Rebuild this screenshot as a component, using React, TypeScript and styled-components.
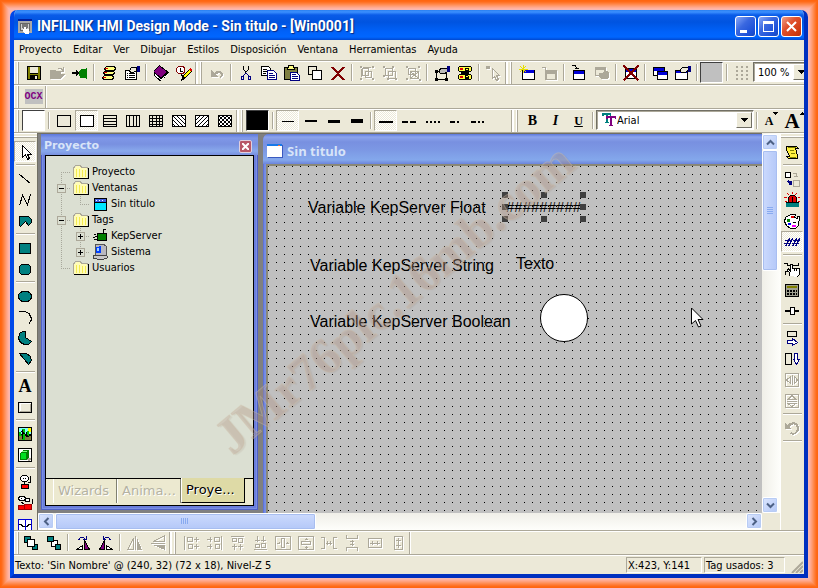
import React from "react";
import styled, { createGlobalStyle, css } from "styled-components";

const face = "#ece9d8";
const shade = "#aca899";
const teal = "#008080";
const navy = "#000080";
const blue = "#0000d8";
const purple = "#800080";

const GlobalStyle = createGlobalStyle`
  * { box-sizing: border-box; }
  body { margin: 0; font: 11px/16px "DejaVu Sans Condensed", "DejaVu Sans", sans-serif; color: #000; }
  button, select { font: inherit; color: inherit; padding: 0; margin: 0; border: 0; background: none; }
  ul { list-style: none; margin: 0; padding: 0; }
`;

/* ---------- icon drawings, 16 x 16 grid ---------- */

type Shape = [d: string, fill?: string, stroke?: string, width?: number];

const box = (x: number, y: number, w: number, h: number) => `M${x} ${y}h${w}v${h}h${-w}z`;

const art: Record<string, Shape[]> = {
  save: [[box(1, 1, 14, 14), "#000"], [box(2, 2, 2, 12), "#808000"], [box(12, 2, 2, 12), "#808000"], [box(4, 9, 8, 1), "#808000"], [box(4, 2, 8, 6), face], [box(5, 10, 6, 4), "#000"], [box(9, 11, 2, 3), face]],
  open: [["M1 14V5h5l1 1h5v3h4l-4 5z", shade], ["M9 3.500h3l2 2M14.500 2v4h-3", undefined, shade]],
  plug: [["M0 7h4V5l4 3-4 3V9H0z", "#000"], [box(8, 5, 6, 8), "#008000"], ["M9 4h5v9H9l-2-2V6z", "#008000"], [box(14, 3, 1, 11), "#008000"]],
  stack: [["M5.500 1.500h8l1 2-1 2h-9l-1-2zM4.500 6.500h8l1 1-1 2h-9l-1-2zM3.500 10.500h8l1 2-1 2h-9l-1-2z", "#ffff80", "#000"], ["M4 3h3v1H4zM3 7h3v1H3zM2 12h3v1H2z", "#e00000"]],
  props: [["M1.500 5.500h11v9h-11z", "#fff", "#000"], ["M3 8h1v1H3zM3 10h1v1H3zM3 12h1v1H3z", "#000"], ["M5 8.500h6M5 10.500h6M5 12.500h6", undefined, "#000"], ["M5.500 5.500l2-3h5v3l-3 2h-3z", face, "#000"], [box(13, 1, 3, 6), navy]],
  props2: [["M2.500 6.500h10v8h-10z", face, "#000"], ["M1 13h3v3H1zM11 13h3v3h-3zM1 5h3v3H1z", "#000"], ["M5 6l2-3h6v4l-3 2-4-1z", "#bbb", "#000"], [box(13, 1, 3, 6), navy]],
  conn: [["M2.500 1.500h11l1 1v3l-1 1h-11l-1-1v-3z", "#ffff40", "#000"], ["M2.500 9.500h11l1 1v3l-1 1h-11l-1-1v-3z", "#ffff40", "#000"], ["M4 7h8v2H4z", "#000"], ["M8.500 6V3.500h3V6M9 5h2M8.500 10v4M9 10.500h2M9 12.500h3M11.500 11v3M9 13.500h2", undefined, "#000"], ["M3 3h3v2H3zM3 11h3v2H3z", "#e00000"]],
  book: [["M6 0l10 7-1 3-8 6-6-5V6z", "#000"], ["M6 1l8 6-6 5-7-5z", purple], ["M2 9l6 5 7-5v1l-7 5-6-4z", "#fff"]],
  clock: [["M2 1h5l2 2v4l-2 2H2L0 7V3z", "#800000"], ["M3 2h3l2 1v4L6 8H3L1 7V3z", "#fff"], ["M4.500 3v3h2M5 9l2 3", undefined, "#000"], ["M7 14l1-4 6-6 2 2-6 6z", "#ffff00", "#000"], ["M14 3l2 2-1 2-2-2z", "#e00000"], ["M6 12l3 2-4 2z", "#000"]],
  undo: [["M2 5v7h7L7 10c2-3 5-2 5 0l-1 3h1l2-3c0-4-5-6-9-2z", shade]],
  cut: [["M5.500 1v3l2 3v2M10.500 1v3l-2 3", undefined, "#000"], ["M7.500 8l-2 3M8.500 8l2 3", undefined, navy], ["M3.500 11.500h2v3h-2zM10.500 11.500h2v3h-2z", undefined, navy]],
  copy: [["M.500 1.500h7l2 2v7h-9z", "#fff", "#000"], ["M2 4.500h4M2 6.500h4M2 8.500h3", undefined, "#000"], ["M6.500 5.500h6l3 3v6h-9z", "#fff", navy], ["M8 8.500h4M8 10.500h6M8 12.500h6", undefined, navy]],
  paste: [[box(0, 2, 14, 13), "#000"], [box(1, 3, 12, 11), "#808040"], ["M4 0h6v2h1v3H3V2h1z", "#000"], ["M5 1h4v2h1v1H4V3h1z", "#ffff80"], ["M6.500 7.500h6l3 3v5h-9z", "#fff", navy], ["M8 9.500h4M8 11.500h6M8 13.500h6", undefined, navy]],
  dup: [["M1.500 1.500h8v8h-8z", face, "#000"], ["M5.500 5.500h9v9h-9z", "#fff", "#000"]],
  del: [["M2 2l12 13M14 2L2 15", undefined, "#800000", 2]],
  group: [["M3.500 3.500h6v7h-6zM6.500 6.500h6v6h-6z", undefined, shade], ["M1 1h2v2H1zM13 1h2v2h-2zM1 13h2v2H1zM13 13h2v2h-2zM4 2h8v1H4zM2 4h1v8H2z", shade]],
  ungroup: [["M3.500 3.500h7v7h-7zM6.500 6.500h7v7h-7z", undefined, shade], ["M1 1h2v2H1zM10 1h2v2h-2zM1 10h2v2H1zM13 13h2v2h-2zM5 13h2v2H5z", shade]],
  regroup: [["M3.500 3.500h7v6h-7zM5.500 6.500h8v7h-8zM6 7l7 6M13 7l-7 6", undefined, shade], ["M1 1h2v2H1zM13 1h2v2h-2zM1 13h2v2H1zM14 14h2v2h-2z", shade]],
  pick: [["M0 1h4v3H0z", shade], ["M6.500 3.500v10l2-2 2 4 2-1-2-4h3z", undefined, shade]],
  newwin: [[box(3, 5, 13, 10), "#000"], [box(4, 5, 11, 3), blue], [box(4, 8, 11, 6), "#fff"], ["M0 4h9M4.500 0v8M1 1l6 6M7 1L1 7", undefined, "#e8e000"]],
  delwin: [[box(3, 5, 12, 10), shade], [box(5, 9, 8, 5), face], ["M0 2h3v3M3 5h2", undefined, shade]],
  winto: [[box(2, 5, 12, 10), "#000"], [box(3, 6, 10, 3), blue], [box(3, 9, 10, 5), "#fff"], ["M1 .500h3l2 3M4 3.500h4", undefined, "#000"]],
  winoff: [[box(1, 2, 11, 9), shade], [box(2, 5, 8, 5), face], ["M5 8h3l2-2h3l2 2v5l-2 1H7l-2-2z", shade]],
  winx: [[box(2, 3, 12, 11), "#000"], [box(3, 4, 10, 3), blue], [box(3, 7, 10, 6), "#fff"], ["M.500 .500l15 15M15.500 .500l-15 15", undefined, "#800000", 2]],
  wins: [[box(1, 2, 12, 9), "#000"], [box(2, 3, 10, 3), blue], [box(2, 6, 10, 4), "#fff"], [box(5, 6, 11, 9), "#000"], [box(6, 7, 9, 3), blue], [box(6, 10, 9, 4), "#fff"]],
  winprop: [[box(0, 5, 13, 10), "#000"], [box(1, 6, 11, 2), blue], [box(1, 8, 11, 6), "#fff"], ["M5 5l3-3h6v3l-4 3-4-1z", face, "#000"], [box(13, 1, 3, 6), navy]],
  grid: [["M2 1h2v2H2zM7 1h2v2H7zM12 1h2v2h-2zM2 5h2v2H2zM7 5h2v2H7zM12 5h2v2h-2zM2 9h2v2H2zM7 9h2v2H7zM12 9h2v2h-2zM2 13h2v2H2zM7 13h2v2H7zM12 13h2v2h-2z", shade]],
  rect: [["M1.500 2.500h13v11h-13z", "none", "#000"]],
  rectw: [["M1.500 2.500h13v11h-13z", "#fff", "#000"]],
  hlines: [["M1.500 2.500h13v11h-13zM2 5.500h12M2 8.500h12M2 11.500h12", "none", "#000"]],
  vlines: [["M1.500 2.500h13v11h-13zM4.500 3v10M8.500 3v10M11.500 3v10", "none", "#000"]],
  cross: [["M1.500 2.500h13v11h-13zM2 5.500h12M2 8.500h12M2 11.500h12M4.500 3v10M8.500 3v10M11.500 3v10", "none", "#000"]],
  diag: [["M1.500 2.500h13v11h-13z", "#fff", "#000"], ["M2.500 3.500l10 10M6.500 3.500l8 8M10.500 3.500l4 4M2.500 7.500l6 6M2.500 11.500l2 2", undefined, "#000"]],
  diag2: [["M1.500 2.500h13v11h-13z", "#fff", "#000"], ["M13.500 3.500l-10 10M9.500 3.500l-8 8M5.500 3.500l-4 4M14.500 6.500l-7 7M14.500 10.500l-3 3", undefined, "#000"]],
  hatch: [["M1.500 2.500h13v11h-13z", "#fff", "#000"], ["M2.500 3.500l10 10M6.500 3.500l8 8M10.500 3.500l4 4M2.500 7.500l6 6M2.500 11.500l2 2M13.500 3.500l-10 10M9.500 3.500l-8 8M5.500 3.500l-4 4M14.500 6.500l-7 7M14.500 10.500l-3 3", undefined, "#000"]],
  w1: [[box(2, 8, 12, 1), "#000"]],
  w2: [[box(2, 7, 12, 2), "#000"]],
  w3: [[box(2, 7, 12, 3), "#000"]],
  w4: [[box(2, 6, 12, 4), "#000"]],
  s1: [[box(1, 8, 14, 2), "#000"]],
  s2: [["M1 8h6v2H1zM9 8h6v2H9z", "#000"]],
  s3: [["M2 8h2v2H2zM6 8h2v2H6zM10 8h2v2h-2zM14 8h2v2h-2z", "#000"]],
  s4: [["M3 8h5v2H3zM10 8h2v2h-2z", "#000"]],
  s5: [["M1 8h5v2H1zM8 8h2v2H8zM12 8h2v2h-2z", "#000"]],
  tt: [["M1 1h9v3H9V3H7v7h1v1H4v-1h1V3H3v1H1z", teal], ["M5 4h10v3h-1V6h-3v7h1v1H8v-1h1V6H7v1H5z", purple]],
  arrow: [["M5.500 1.500v12l3-3 2 5 2-1-2-4h4z", "#fff", "#000"]],
  line: [["M2.500 3.500l11 9", undefined, "#000"]],
  zig: [["M2.500 13.500l3-10 5 9 3-10", undefined, "#000"]],
  poly: [["M2.500 3.500h9l3 3v3l-3 3-3-4-5 5-1-1z", teal, "#000"]],
  frect: [["M2.500 3.500h11v10h-11z", teal, "#000"]],
  rrect: [["M4.500 3.500h7l2 2v6l-2 2h-7l-2-2v-6z", teal, "#000"]],
  ellipse: [["M1.500 8.500a6.500 5.500 0 0 1 13 0a6.500 5.500 0 0 1-13 0z", teal, "#000"]],
  arc: [["M2 2.500h6l4 2 2 4v3l-2 3", undefined, "#000"]],
  pie: [["M8.500 1.500h-3l-3 2-1 5 2 4 4 2h4l3-3-6-4z", teal, "#000"]],
  chord: [["M2.500 2.500h7l4 3 1 4-3 4z", teal, "#000"]],
  btn: [["M1.500 3.500h13v10h-13z", face, "#000"], ["M3 12V4.500h11", undefined, "#fff"], ["M3 12.500h10.500V5", undefined, shade]],
  cactus: [[box(1, 1, 14, 14), "#000"], [box(2, 2, 12, 6), "#80ffff"], [box(2, 10, 12, 4), "#808040"], [box(11, 2, 3, 4), "#ffff00"], ["M5 3h3v11H5zM2 6h2v3h1v1H2zM9 8h1V5h2v5H9z", "#00c000"], ["M5 4v9M9 6v5M4 5l8 6", undefined, "#000"]],
  cube: [["M1.500 1.500h13v13h-13z", "#fff", "#000"], ["M10 11h4v2l-3 1z", shade], ["M3 6l3-3h6v7l-3 3H3z", "#008000"], [box(4, 6, 5, 6), "#00e020"], ["M4 5l2-1h5l-2 1z", "#80ff80"]],
  alarm: [["M5.500 1.500h4l2 2v2l-2 2h-4l-2-2v-2z", "#fff", "#000"], ["M13.500 2v6l-2 1M6 4h1M8 4h1M7.500 8v2", undefined, "#000"], ["M4.500 10.500h7v4h-7z", "#ff0000", "#000"]],
  alarms: [["M2.500 1.500h5l1 2-1 2h-5l-1-2zM8.500 3.500h4v3h-4z", "#fff", "#000"], ["M15 4v5M4 7l3 2M4 3h1", undefined, "#000"], ["M1.500 10.500h6v4h-6zM7.500 9.500h7v5h-7z", "#ff0000", "#a00000"]],
  trend: [["M1.500 3.500h13v12h-13z", "#fff", blue], ["M2 8.500h2l2 2h4l2-2h2", undefined, "#000"], ["M8.500 4v11", undefined, blue]],
  scroll: [["M2.500 2.500h10l2 2h-3l2 7v3h-9l-2-2h3l-3-7z", "#fff040", "#000"], ["M4 3.500h8M6 13.500h6M6 6.500h4M7 9.500h4", undefined, "#808000"]],
  swap: [["M1.500 1.500h5v5h-5z", "#fff", "#000"], ["M9.500 9.500h6v6h-6z", undefined, shade], ["M9 2h3v4M10 5h4", undefined, shade], ["M2 11l3-3v2h3v4H5v-2z", navy]],
  siren: [["M4 12l1-7 2-2h3l2 2 1 7z", "#e00000", "#000"], [box(2, 11, 13, 4), teal], ["M2 10.500h13M8.500 5v6", undefined, "#000"], ["M8 0v2M3 1l2 2M13 1l-2 2M0 5h3M14 5h3M1 9h2M14 9h2", undefined, "#e00000"]],
  palette: [["M6.500 1.500h5l-1 3 3 1v-2h2l-1 9-3 3h-5l-4-3-2-4 1-4z", "#fff", "#000"], ["M7 3h3v2H7z", "#e00000"], ["M3 6h3v3H3z", "#008000"], ["M4 10h3v2H4z", "#0000ff"], ["M8 12h4v2H8z", "#ff00ff"], ["M9 9h3v1H9z", "#000"]],
  hashes: [["M1.500 12.500l4-8M4.500 12.500l4-8M8.500 12.500l4-8M11.500 12.500l4-8M1 6.500h7M0 9.500h7M9 6.500h7M8 9.500h7", undefined, navy]],
  hand: [["M0 2.500h3v2h11V2M1.500 14v-4h2", undefined, "#000"], ["M5.500 15v-3l-2-3 1-1 2 2V3h2v4h7v6l-2 3", "#fff", "#000"], ["M10.500 7v3M12.500 7v3", undefined, "#000"]],
  calc: [["M1.500 2.500h13v12h-13z", "#a0a090", "#000"], [box(3, 4, 10, 2), "#808000"], ["M3 8h2v2H3zM6 8h2v2H6zM9 8h2v2H9zM12 8h1v2h-1zM3 11h2v2H3zM6 11h2v2H6zM9 11h2v2H9zM12 11h1v2h-1z", "#000"]],
  slider: [["M1 8h14", undefined, "#000", 2], ["M6.500 4.500h4v7h-4z", "#fff", "#000"]],
  boxarrow: [["M3.500 1.500h9v5h-9z", face, "#000"], ["M3.500 10.500h5v-2l5 4-5 3v-2h-5z", "#fff", navy]],
  boxdown: [["M1.500 2.500h6v11h-6z", face, "#000"], ["M10.500 2.500h3v6h2l-3 5-3-5h1z", "#fff", navy]],
  fliph: [["M1.500 1.500h13v13h-13zM8.500 3v10M6.500 4.500v7l-4-3.500zM10.500 4.500v7l3-3.500z", undefined, shade]],
  flipv: [["M1.500 1.500h13v13h-13zM3 8.500h10M4 6.500h8l-4-4zM4 10.500h8l-4 3z", undefined, shade]],
  rotate: [["M1 3v6h6L5 7c3-4 8-3 8 1s-3 6-6 4l-1 2c5 2 9-1 9-6 0-6-7-8-12-3z", shade]],
  front: [["M1.500 1.500h6v6h-6zM9.500 9.500h5v5h-5z", teal, "#000"], ["M4.500 4.500h7v7h-7z", "#fff", "#000"]],
  back: [["M5.500 5.500h6v6h-6z", "#fff", "#000"], ["M1.500 1.500h6v5h-6zM9.500 9.500h5v5h-5z", teal, "#000"]],
  rotl: [["M1.500 14.500h6v-4z", "#fff", "#000"], ["M9.500 14.500h5l-5-9z", purple, "#000"], ["M3.500 5.500c1-4 5-4 7-1M8 4.500h3V1", undefined, navy]],
  rotr: [["M8.500 14.500h6l-6-4z", "#fff", "#000"], ["M1.500 14.500h5v-9z", purple, "#000"], ["M12.500 5.500c-1-4-5-4-7-1M8 4.500H5V1", undefined, navy]],
  mirh: [["M1 14.500h5.500V3zM8.500 1v14", undefined, shade], ["M10 15h5L10 3z", shade]],
  mirv: [["M14.500 1v5.500H3zM1 8.500h14", undefined, shade], ["M15 10v5L3 10z", shade]],
  al: [["M1.500 1v14M4.500 2.500h5v4h-5zM5.500 9.500h4v4h-4zM11 4.500h5M13 2v5M11 11.500h5M13 9v5", undefined, shade]],
  ar: [["M15.500 1v14M8.500 2.500h5v4h-5zM9.500 9.500h4v4h-4zM1 4.500h5M4 2v5M1 11.500h5M4 9v5", undefined, shade]],
  at: [["M2 1.500h13M3.500 3.500h4v3h-4zM9.500 3.500h4v4h-4zM5.500 9v6M3 11h5M11.500 9v6M9 11h5", undefined, shade]],
  ab: [["M2 14.500h13M3.500 9.500h4v3h-4zM9.500 8.500h4v4h-4zM5.500 1v6M3 5h5M11.500 1v6M9 5h5", undefined, shade]],
  ch: [["M.500 1.500h15v13h-15zM6.500 3.500h3v9h-3zM2 8h3M11 8h3M4 7v2M12 7v2", undefined, shade]],
  cv: [["M.500 1.500h15v13h-15zM3.500 6.500h9v3h-9zM8 3v2M8 11v3M7 4.500h3M7 12.500h3", undefined, shade]],
  sh: [["M0 2.500h3.500v11H0M16 2.500h-3.500v11H16M5 8h6M6.500 6v4M9.500 6v4", undefined, shade]],
  sv: [["M2.500 0v3.500h11V0M2.500 16v-3.500h11V16M8 5v6M6 6.500h4M6 9.500h4", undefined, shade]],
  mw: [["M1.500 3.500h13v9h-13zM3 8h10M5.500 6v4M10.500 6v4", undefined, shade]],
  mh: [["M4.500 1.500h8v13h-8zM8.500 3v10M6 5.500h5M6 10.500h5", undefined, shade]],
  folder: [["M1 14V4l2-2h5l1 2h5v10z", "#fffcb8"], ["M.500 13.500V4l2-2.500h5l1 2h5.500v1", undefined, shade], ["M1 14.500h14.500V4", undefined, "#000"], ["M3 5v8M6 5v8M9 6v7M12 6v7", undefined, "#f4ec50"]],
  window: [["M2.500 2.500h12v12h-12z", "#00e8ff", "#000"], [box(3, 3, 11, 3), "#4060e0"], ["M3 6.500h11", undefined, "#000"], ["M4 4h1v1H4zM7 4h1v1H7zM10 4h1v1h-1z", "#fff"]],
  server: [["M5.500 5.500h9v7h-9z", "#008000", "#000"], ["M11.500 1v4M2 6.500h2M2 11.500h3M1 9h2M3 8h2M12 1h2", undefined, "#000"]],
  pc: [["M3 1l8-1 3 2v9l-4 1-6-1z", "#b8b8c0", "#555"], ["M4 3l5-1v7H4z", "#0040ff"], [box(5, 4, 2, 3), "#a0d0ff"], ["M1 12l8-1 6 1v2l-6 2-8-2z", "#c8c8c8", "#444"]],
  app: [[box(1, 1, 14, 14), "#a8a8a8"], [box(1, 1, 14, 2), "#0020a0"], ["M3.500 5.500h9v7h-9z", "#d0d0d0", "#666"], ["M5 6h6v3l-3 3-3-2z", "#777"], ["M7 9h2v2h3v5H8l-2-3z", "#fff"]],
};

const Svg = styled.svg<{ $off?: boolean }>`
  display: block;
  flex: none;
  filter: ${(p) => (p.$off ? "drop-shadow(1px 1px 0 #fff)" : "none")};
`;

function Icon({ name, off, size = 16 }: { name: string; off?: boolean; size?: number }) {
  return (
    <Svg width={size} height={size} viewBox="0 0 16 16" shapeRendering="crispEdges" $off={off} aria-hidden="true">
      {art[name].map(([d, fill, stroke, width], i) => (
        <path key={i} d={d} fill={fill ?? "none"} stroke={stroke} strokeWidth={stroke ? width ?? 1 : undefined} />
      ))}
    </Svg>
  );
}

/* ---------- shell ---------- */

const rings = ["#ff6610", "#ff6a18", "#ff7428", "#ff7f3c", "#ff8b50", "#ff9666", "#ffa07c", "#ffaa90", "#ffb2a2", "#f8b8b0"];

const Page = styled.div`
  height: 100vh;
  min-height: 480px;
  padding: 10px;
  background: #f8b8b0;
  box-shadow: ${rings.map((c, i) => `inset 0 0 0 ${i + 1}px ${c}`).join(", ")};
  display: flex;
`;

const Window = styled.main`
  flex: 1;
  min-width: 0;
  display: flex;
  flex-direction: column;
  border: 4px solid #0048e0;
  border-top: 0;
  border-radius: 7px 7px 0 0;
  border-left-color: #0048e8;
  border-right-color: #0030c0;
  border-bottom-color: #0030c0;
  background: ${face};
  overflow: hidden;
`;

const TitleBar = styled.header`
  height: 30px;
  margin: 0 -4px;
  flex: none;
  padding: 2px 6px 0 7px;
  display: flex;
  align-items: center;
  gap: 4px;
  background: linear-gradient(#2a80f0 0, #3c90ff 2px, #0a5ce8 5px, #0054e0 12px, #0062fa 22px, #0066ff 27px, #0048d0 30px);
`;

const Title = styled.h1`
  flex: 1;
  margin: 0;
  font: bold 14px/20px Roboto, "Noto Sans", sans-serif;
  color: #fff;
  text-shadow: 1px 1px 1px #0a2a80;
  white-space: nowrap;
`;

const CaptionButton = styled.button<{ $close?: boolean }>`
  width: 21px;
  height: 21px;
  border: 1px solid #fff;
  border-radius: 3px;
  display: grid;
  place-items: center;
  background: ${(p) =>
    p.$close
      ? "linear-gradient(135deg, #f0a088, #e0502c 40%, #d03a10 80%, #b83010)"
      : "linear-gradient(135deg, #88a8f8, #3a68e0 40%, #1c50d8 80%, #1848b8)"};
`;

const CaptionGroup = styled.div`
  display: flex;
  gap: 2px;
`;

const MenuBar = styled.nav`
  height: 20px;
  flex: none;
  display: flex;
  gap: 11px;
  padding: 1px 5px;
`;

const MenuItem = styled.button`
  line-height: 18px;
  white-space: nowrap;
`;

const Grip = styled.span`
  width: 5px;
  flex: none;
  margin: 0 3px 0 0;
  border-left: 1px solid #fff;
  border-right: 1px solid ${shade};
  box-shadow: inset -1px 0 0 #fff;
`;

const Bar = styled.div<{ $tight?: boolean }>`
  height: 24px;
  flex: none;
  display: flex;
  overflow: hidden;
  border-top: 1px solid ${shade};
  box-shadow: inset 0 1px 0 #fff;
  padding-top: 1px;
  ${(p) =>
    p.$tight &&
    css`
      > ${Grip}:first-child {
        margin-right: 0;
      }
    `}
`;

const GroupEnd = styled.span`
  width: 2px;
  flex: none;
  border-left: 1px solid ${shade};
  border-right: 1px solid #fff;
`;

const Spacer = styled.span`
  width: 22px;
  flex: none;
`;

const Sep = styled.span<{ $column?: boolean }>`
  flex: none;
  ${(p) =>
    p.$column
      ? css`
          height: 2px;
          width: 19px;
          margin: 2px 2px;
          border-top: 1px solid ${shade};
          border-bottom: 1px solid #fff;
        `
      : css`
          width: 2px;
          height: 17px;
          margin: 2px 2px;
          border-left: 1px solid ${shade};
          border-right: 1px solid #fff;
        `}
`;

const ToolButton = styled.button<{ $on?: boolean; $column?: boolean }>`
  width: ${(p) => (p.$column ? 22 : 23)}px;
  height: 21px;
  flex: none;
  display: grid;
  place-items: center;
  ${(p) =>
    p.$on &&
    css`
      border: 1px solid;
      border-color: ${shade} #fff #fff ${shade};
      background: repeating-conic-gradient(#fff 0 25%, ${face} 0 50%) 0 0 / 2px 2px;
    `}
`;

const LetterButton = styled(ToolButton)<{ $size: number; $italic?: boolean; $under?: boolean }>`
  display: flex;
  align-items: center;
  justify-content: center;
  font-family: "Liberation Serif", serif;
  font-weight: bold;
  font-style: ${(p) => (p.$italic ? "italic" : "normal")};
  font-size: ${(p) => p.$size}px;
  line-height: 18px;
  text-decoration: ${(p) => (p.$under ? "underline" : "none")};
`;

const SizeMark = styled.svg`
  align-self: flex-start;
  margin-top: 2px;
  flex: none;
`;

const Swatch = styled.button<{ $color: string }>`
  width: 23px;
  height: 21px;
  margin-right: 1px;
  flex: none;
  border: 1px solid;
  border-color: #404040 #fff #fff #404040;
  background: ${(p) => p.$color};
`;

const OcxButton = styled(ToolButton)`
  font: bold 10px/15px "Liberation Mono", monospace;
  color: ${purple};
`;
const OcxFace = styled.span`
  background: #c0c0c0;
  width: 18px;
  height: 15px;
`;

const Combo = styled.label<{ $width: number }>`
  width: ${(p) => p.$width}px;
  height: 20px;
  flex: none;
  display: flex;
  align-items: center;
  padding: 0 1px 0 4px;
  border: 1px solid;
  border-color: #716f64 #fff #fff #716f64;
  box-shadow: inset 1px 1px 0 ${shade};
  background: #fff;
`;

const ComboSelect = styled.select`
  flex: 1;
  min-width: 0;
  height: 18px;
  padding-top: 1px;
  appearance: none;
`;

const ComboArrow = styled.span`
  width: 16px;
  height: 16px;
  flex: none;
  display: grid;
  place-items: center;
  background: ${face};
  border: 1px solid;
  border-color: #fff #716f64 #716f64 #fff;
`;

function Dropper() {
  return (
    <ComboArrow aria-hidden="true">
      <svg width="7" height="4" shapeRendering="crispEdges">
        <path d="M0 0h7v1H6v1H5v1H4v1H3V3H2V2H1V1H0z" />
      </svg>
    </ComboArrow>
  );
}

/* ---------- middle area ---------- */

const Middle = styled.div`
  flex: 1;
  min-height: 0;
  display: flex;
  border-top: 1px solid ${shade};
`;

const SideBar = styled.aside<{ $right?: boolean }>`
  width: ${(p) => (p.$right ? 24 : 23)}px;
  flex: none;
  overflow: hidden;
  display: flex;
  flex-direction: column;
  border-left: ${(p) => (p.$right ? "1px solid #fff" : "0")};
`;

const SideGrip = styled.span`
  height: 5px;
  flex: none;
  margin-bottom: 3px;
  border-top: 1px solid #fff;
  border-bottom: 1px solid ${shade};
  box-shadow: inset 0 -1px 0 #fff;
`;

const Desktop = styled.section`
  flex: 1;
  min-width: 0;
  position: relative;
  display: grid;
  grid-template: minmax(0, 1fr) 17px / minmax(0, 1fr) 18px;
  border-left: 1px solid #716f64;
  background: ${face};
`;

const Workspace = styled.div`
  display: flex;
  gap: 5px;
  padding: 0 0 0 3px;
  min-width: 0;
  min-height: 0;
  overflow: hidden;
  background: #808080;
  align-items: stretch;
  border-top: 1px solid #716f64;
`;

const Panel = styled.section`
  width: 217px;
  flex: none;
  margin-bottom: 3px;
  display: flex;
  flex-direction: column;
  padding: 0 4px 4px;
  background: #6a7ddc;
  box-shadow: inset 0 0 0 1px #5060c8, inset 0 0 0 2px #7a90e4;
`;

const PanelTitle = styled.header`
  height: 21px;
  flex: none;
  margin: 0 -4px;
  padding: 3px 6px 0 3px;
  display: flex;
  align-items: center;
  justify-content: space-between;
  color: #d8e4f8;
  background: linear-gradient(#5c78dc, #8098e8 4px, #7890e0 10px, #88a8ec 17px, #7890e0);
`;

const PanelHeading = styled.h2`
  margin: 0;
  font: bold 11px/16px "DejaVu Sans", sans-serif;
`;

const PanelClose = styled.button`
  width: 13px;
  height: 13px;
  display: grid;
  place-items: center;
  border: 1px solid #e0d0e0;
  border-radius: 2px;
  background: #b85868;
`;

const PanelBody = styled.div`
  flex: 1;
  min-height: 0;
  display: flex;
  flex-direction: column;
  border: 1px solid #000;
  background: #dbdfd2;
`;

const Tree = styled.ul`
  flex: 1;
  padding: 8px 0 0 6px;
`;

const TreeRow = styled.li`
  height: 16px;
  display: flex;
  align-items: center;
  white-space: nowrap;
`;

const dotsV = "repeating-linear-gradient(#a8a89c 0 1px, transparent 1px 2px)";
const dotsH = "repeating-linear-gradient(90deg, #a8a89c 0 1px, transparent 1px 2px)";

type GuideKind = "first" | "mid" | "last" | "pass";
const guideBackground: Record<GuideKind, string> = {
  first: `${dotsV} 9px 8px / 1px 8px no-repeat, ${dotsH} 9px 8px / 10px 1px no-repeat`,
  mid: `${dotsV} 9px 0 / 1px 16px no-repeat, ${dotsH} 9px 8px / 10px 1px no-repeat`,
  last: `${dotsV} 9px 0 / 1px 8px no-repeat, ${dotsH} 9px 8px / 10px 1px no-repeat`,
  pass: `${dotsV} 9px 0 / 1px 16px no-repeat`,
};

const Guide = styled.span<{ $kind: GuideKind }>`
  width: 19px;
  height: 16px;
  flex: none;
  display: grid;
  place-items: center;
  background: ${(p) => guideBackground[p.$kind]};
`;

const Expander = styled.button`
  width: 9px;
  height: 9px;
  display: grid;
  place-items: center;
  border: 1px solid ${shade};
  background: #dbdfd2;
`;

const TreeIcon = styled.span`
  width: 21px;
  flex: none;
  padding-left: 2px;
`;

type Node = { label: string; icon: string; guides: GuideKind[]; sign?: "+" | "-" };
const nodes: Node[] = [
  { label: "Proyecto", icon: "folder", guides: ["first"] },
  { label: "Ventanas", icon: "folder", guides: ["mid"], sign: "-" },
  { label: "Sin titulo", icon: "window", guides: ["pass", "last"] },
  { label: "Tags", icon: "folder", guides: ["mid"], sign: "-" },
  { label: "KepServer", icon: "server", guides: ["pass", "mid"], sign: "+" },
  { label: "Sistema", icon: "pc", guides: ["pass", "last"], sign: "+" },
  { label: "Usuarios", icon: "folder", guides: ["last"] },
];

const TabStrip = styled.div`
  height: 27px;
  flex: none;
  display: flex;
  padding: 0 7px 2px 7px;
  border-top: 1px solid #000;
  background: #ece9d0;
  font: 13px/24px "DejaVu Sans", sans-serif;
`;

const Tab = styled.button<{ $on?: boolean }>`
  width: 64px;
  flex: none;
  white-space: nowrap;
  text-align: left;
  padding-left: 4px;
  color: ${(p) => (p.$on ? "#000" : "#b4b2a2")};
  text-shadow: 1px 1px 0 #fff;
  border-left: 1px solid #fff;
  border-right: 1px solid ${(p) => (p.$on ? "#000" : "#808070")};
  ${(p) =>
    p.$on &&
    css`
      margin-top: -1px;
      border-bottom: 1px solid #000;
      background: #dedaa6;
    `}
`;

const Child = styled.section`
  flex: 1;
  min-width: 0;
  display: flex;
  flex-direction: column;
  padding-left: 3px;
  border-top-left-radius: 6px;
  background: linear-gradient(90deg, #5468d4, #7c94e8 2px, #6a80dc 4px);
`;

const ChildTitle = styled.header`
  height: 30px;
  flex: none;
  margin-left: -3px;
  padding: 4px 4px 0;
  display: flex;
  align-items: center;
  gap: 4px;
  border-top-left-radius: 6px;
  background: linear-gradient(#5c78dc, #8ca4ec 3px, #7890e0 8px, #7c98e4 16px, #84a8ec 26px, #6c84dc);
`;

const ChildHeading = styled.h2`
  margin: 0;
  font: bold 13px/18px "Open Sans", "Noto Sans", sans-serif;
  color: #d8e4f8;
`;

const Canvas = styled.div`
  flex: 1;
  min-height: 0;
  position: relative;
  overflow: hidden;
  border-top: 2px solid #8a8878;
  border-left: 2px solid #8a8878;
  background: conic-gradient(from 270deg at 1px 1px, #000 25%, transparent 0) 0 0 / 8px 8px, #c0c0c0;
`;

const CanvasText = styled.span<{ $x: number; $y: number }>`
  position: absolute;
  left: ${(p) => p.$x}px;
  top: ${(p) => p.$y}px;
  font: 16px/18px "Liberation Sans", Arial, sans-serif;
  white-space: nowrap;
`;

const HashField = styled(CanvasText)`
  font-size: 15px;
`;

const Lamp = styled.span`
  position: absolute;
  left: 272px;
  top: 128px;
  width: 48px;
  height: 48px;
  border: 1px solid #000;
  border-radius: 50%;
  background: #fff;
`;

const Handle = styled.span<{ $x: number; $y: number }>`
  position: absolute;
  left: ${(p) => p.$x}px;
  top: ${(p) => p.$y}px;
  width: 6px;
  height: 6px;
  background: #404040;
`;

const handles = [
  [234, 26], [273, 26], [312, 26],
  [234, 38], [312, 38],
  [234, 50], [273, 50], [312, 50],
];

const CursorMark = styled.svg`
  position: absolute;
  left: 423px;
  top: 141px;
`;

const Watermark = styled.div`
  position: absolute;
  left: 200px;
  top: 279px;
  transform-origin: 0 100%;
  transform: rotate(-40deg);
  font: bold 51px/51px "Liberation Serif", serif;
  color: rgba(184, 154, 140, 0.3);
  -webkit-text-stroke: 1px rgba(204, 190, 168, 0.4);
  text-shadow: 1px 2px 1px rgba(130, 90, 70, 0.1);
  white-space: nowrap;
  pointer-events: none;
`;

const Scroll = styled.div<{ $row?: boolean }>`
  display: flex;
  flex-direction: ${(p) => (p.$row ? "row" : "column")};
  padding: ${(p) => (p.$row ? "0" : "1px 2px 0 0")};
  background: linear-gradient(${(p) => (p.$row ? "180deg" : "90deg")}, #f0efe8, #fefefb);
`;

const ScrollButton = styled.button`
  width: 16px;
  height: 16px;
  flex: none;
  display: grid;
  place-items: center;
  border: 1px solid #fff;
  border-radius: 2px;
  background: linear-gradient(135deg, #dce6fe, #b4c8f6);
  box-shadow: inset 0 0 0 1px #b8ccf4;
`;

const Thumb = styled.div<{ $row?: boolean }>`
  flex: none;
  display: grid;
  place-items: center;
  border: 1px solid #fff;
  border-radius: 2px;
  box-shadow: inset 0 0 0 1px #a8bef0;
  ${(p) =>
    p.$row
      ? css`
          width: 36%;
          margin-left: 1px;
          background: linear-gradient(#ccdafd, #b4c8f8);
        `
      : css`
          height: 32%;
          background: linear-gradient(90deg, #ccdafd, #b4c8f8);
        `}
`;

const Track = styled.div`
  flex: 1;
`;

const Chevron = ({ d }: { d: string }) => (
  <svg width="9" height="9" aria-hidden="true">
    <path d={d} fill="none" stroke="#4d6185" strokeWidth="2" />
  </svg>
);

/* ---------- status ---------- */

const Status = styled.footer`
  height: 20px;
  flex: none;
  display: flex;
  align-items: stretch;
  gap: 2px;
  padding: 2px 1px 0 1px;
  border-top: 1px solid ${shade};
  box-shadow: inset 0 1px 0 #fff;
  line-height: 18px;
  white-space: nowrap;
`;

const StatusText = styled.span`
  flex: 1;
`;

const StatusPane = styled.span<{ $width: number }>`
  width: ${(p) => p.$width}px;
  height: 16px;
  line-height: 16px;
  padding-left: 1px;
  border: 1px solid;
  border-color: ${shade} #fff #fff ${shade};
`;

/* ---------- composition ---------- */

type Item = string | "|";

function Tools({ items, off = [], on = [], column }: { items: Item[]; off?: string[]; on?: string[]; column?: boolean }) {
  return (
    <>
      {items.map((name, i) =>
        name === "|" ? (
          <Sep key={i} $column={column} />
        ) : (
          <ToolButton key={i} type="button" aria-label={name} $on={on.includes(name)} $column={column} disabled={off.includes(name)}>
            <Icon name={name} off={off.includes(name)} />
          </ToolButton>
        )
      )}
    </>
  );
}

const menus = ["Proyecto", "Editar", "Ver", "Dibujar", "Estilos", "Disposición", "Ventana", "Herramientas", "Ayuda"];
const alignTools = ["al", "ar", "at", "ab", "ch", "cv", "sh", "sv", "mw", "mh"];

export default function App() {
  return (
    <Page>
      <GlobalStyle />
      <Window>
        <TitleBar>
          <Icon name="app" />
          <Title>INFILINK HMI Design Mode - Sin titulo - [Win0001]</Title>
          <CaptionGroup>
            <CaptionButton type="button" aria-label="Minimizar">
              <svg width="13" height="13"><path d="M1 10h7v3H1z" fill="#fff" /></svg>
            </CaptionButton>
            <CaptionButton type="button" aria-label="Maximizar">
              <svg width="13" height="13" shapeRendering="crispEdges"><path d="M1 1h11v11H1zM2 4v7h9V4z" fill="#fff" fillRule="evenodd" /></svg>
            </CaptionButton>
            <CaptionButton type="button" aria-label="Cerrar" $close>
              <svg width="13" height="13"><path d="M2 2l9 9M11 2l-9 9" stroke="#fff" strokeWidth="2" /></svg>
            </CaptionButton>
          </CaptionGroup>
        </TitleBar>

        <MenuBar>
          {menus.map((m) => (
            <MenuItem key={m} type="button">{m}</MenuItem>
          ))}
        </MenuBar>

        <Bar>
          <Grip />
          <Tools items={["save", "open", "plug", "|", "stack", "props", "|", "book", "clock"]} off={["open"]} />
          <GroupEnd /><Grip />
          <Tools
            items={["undo", "|", "cut", "copy", "paste", "dup", "del", "|", "group", "ungroup", "regroup", "|", "props2", "conn", "|", "pick"]}
            off={["undo", "group", "ungroup", "regroup", "pick"]}
          />
          <GroupEnd /><Grip />
          <Tools items={["newwin", "delwin", "|", "winto", "winoff", "|", "winx", "|", "wins", "winprop", "|"]} off={["delwin", "winoff"]} />
          <Swatch type="button" aria-label="Color de fondo" $color="#c0c0c0" />
          <Tools items={["|", "grid"]} />
          <Combo $width={58}>
            <ComboSelect aria-label="Zoom" defaultValue="100 %">
              <option>100 %</option>
            </ComboSelect>
            <Dropper />
          </Combo>
        </Bar>

        <Bar>
          <Grip />
          <OcxButton type="button"><OcxFace>OCX</OcxFace></OcxButton>
          <GroupEnd />
        </Bar>

        <Bar>
          <Grip />
          <Swatch type="button" aria-label="Color de relleno" $color="#fff" />
          <Tools items={["|", "rect", "rectw", "hlines", "vlines", "cross", "diag", "diag2", "hatch"]} on={["rectw"]} />
          <GroupEnd /><Grip />
          <Swatch type="button" aria-label="Color de línea" $color="#000" />
          <Tools items={["|", "w1", "w2", "w3", "w4", "|", "s1", "s2", "s3", "s4", "s5"]} on={["w1", "s1"]} />
          <Spacer />
          <GroupEnd /><Grip />
          <LetterButton type="button" $size={14}>B</LetterButton>
          <LetterButton type="button" $size={14} $italic>I</LetterButton>
          <LetterButton type="button" $size={12} $under>U</LetterButton>
          <Sep />
          <Combo $width={158}>
            <Icon name="tt" />
            <ComboSelect aria-label="Fuente" defaultValue="Arial">
              <option>Arial</option>
            </ComboSelect>
            <Dropper />
          </Combo>
          <Sep />
          <LetterButton type="button" $size={12}>
            A
            <SizeMark width="5" height="3" shapeRendering="crispEdges" aria-hidden="true">
              <path d="M0 0h5v1H4v1H3v1H2V2H1V1H0z" />
            </SizeMark>
          </LetterButton>
          <LetterButton type="button" $size={21}>
            A
            <SizeMark width="5" height="3" shapeRendering="crispEdges" aria-hidden="true">
              <path d="M0 3h5V2H4V1H3V0H2v1H1v1H0z" />
            </SizeMark>
          </LetterButton>
        </Bar>

        <Middle>
          <SideBar>
            <SideGrip />
            <Tools column items={["arrow", "|", "line", "zig", "poly", "|", "frect", "rrect", "|", "ellipse", "arc", "pie", "chord", "|"]} on={["arrow"]} />
            <LetterButton type="button" $size={18} $column>A</LetterButton>
            <Tools column items={["btn", "|", "cactus", "cube", "|", "alarm", "alarms", "trend"]} />
          </SideBar>

          <Desktop>
            <Workspace>
              <Panel>
                <PanelTitle>
                  <PanelHeading>Proyecto</PanelHeading>
                  <PanelClose type="button" aria-label="Cerrar panel">
                    <svg width="7" height="7"><path d="M0 0l7 7M7 0L0 7" stroke="#fff" strokeWidth="2" /></svg>
                  </PanelClose>
                </PanelTitle>
                <PanelBody>
                  <Tree>
                    {nodes.map((n) => (
                      <TreeRow key={n.label}>
                        {n.guides.map((g, i) => (
                          <Guide key={i} $kind={g}>
                            {n.sign && i === n.guides.length - 1 && (
                              <Expander type="button" aria-label={n.label}>
                                <svg width="5" height="5" shapeRendering="crispEdges">
                                  <path d={n.sign === "+" ? "M0 2h5v1H0zM2 0h1v5H2z" : "M0 2h5v1H0z"} />
                                </svg>
                              </Expander>
                            )}
                          </Guide>
                        ))}
                        <TreeIcon><Icon name={n.icon} /></TreeIcon>
                        {n.label}
                      </TreeRow>
                    ))}
                  </Tree>
                  <TabStrip>
                    <Tab type="button">Wizards</Tab>
                    <Tab type="button">Anima...</Tab>
                    <Tab type="button" $on>Proye...</Tab>
                  </TabStrip>
                </PanelBody>
              </Panel>

              <Child>
                <ChildTitle>
                  <svg width="16" height="14" shapeRendering="crispEdges" aria-hidden="true">
                    <path d="M1 1h15v13H1z" fill="#3a5ac0" />
                    <path d="M0 0h15v3H0z" fill="#1878e8" />
                    <path d="M11 1h2v1h-2z" fill="#ff7030" />
                    <path d="M0 2h15v11H0z" fill="#fff" />
                  </svg>
                  <ChildHeading>Sin titulo</ChildHeading>
                </ChildTitle>
                <Canvas>
                  <CanvasText $x={40} $y={33}>Variable KepServer Float</CanvasText>
                  <CanvasText $x={42} $y={91}>Variable KepServer String</CanvasText>
                  <CanvasText $x={42} $y={147}>Variable KepServer Boolean</CanvasText>
                  <CanvasText $x={248} $y={89}>Texto</CanvasText>
                  <HashField $x={238} $y={32}>#########</HashField>
                  {handles.map(([x, y]) => (
                    <Handle key={`${x}-${y}`} $x={x} $y={y} />
                  ))}
                  <Lamp />
                  <CursorMark width="13" height="22" viewBox="0 0 13 22" aria-hidden="true">
                    <path d="M.5 1v16l4-3.500 3 6.500 2.500-1-3-6.500h5z" fill="#fff" stroke="#000" />
                  </CursorMark>
                </Canvas>
              </Child>
            </Workspace>

            <Scroll>
              <ScrollButton type="button" aria-label="Subir"><Chevron d="M1 6.500l3.500-3.500L8 6.500" /></ScrollButton>
              <Thumb>
                <svg width="7" height="8" shapeRendering="crispEdges"><path d="M0 .5h6M0 2.500h6M0 4.500h6M0 6.500h6" stroke="#88aaf0" /></svg>
              </Thumb>
              <Track />
              <ScrollButton type="button" aria-label="Bajar"><Chevron d="M1 2.500L4.500 6 8 2.500" /></ScrollButton>
            </Scroll>

            <Scroll $row>
              <ScrollButton type="button" aria-label="Izquierda"><Chevron d="M6.500 1L3 4.500 6.500 8" /></ScrollButton>
              <Thumb $row>
                <svg width="8" height="7" shapeRendering="crispEdges"><path d="M.5 0v6M2.500 0v6M4.500 0v6M6.500 0v6" stroke="#88aaf0" /></svg>
              </Thumb>
              <Track />
              <ScrollButton type="button" aria-label="Derecha"><Chevron d="M2.500 1L6 4.500 2.500 8" /></ScrollButton>
            </Scroll>

            <Watermark>JMr76plc.16mb.com</Watermark>
          </Desktop>

          <SideBar $right>
            <SideGrip />
            <Tools
              column
              items={["scroll", "|", "swap", "siren", "palette", "hashes", "|", "hand", "calc", "slider", "|", "boxarrow", "boxdown", "fliph", "flipv", "|", "rotate", "|"]}
              on={["hashes"]}
              off={["fliph", "flipv", "rotate"]}
            />
          </SideBar>
        </Middle>

        <Bar $tight>
          <Grip />
          <Tools items={["front", "back", "|", "rotl", "rotr", "|", "mirh", "mirv"]} off={["mirh", "mirv"]} />
          <GroupEnd /><Grip />
          <Tools items={alignTools} off={alignTools} />
          <GroupEnd />
        </Bar>

        <Status>
          <StatusText>Texto: 'Sin Nombre' @ (240, 32) (72 x 18), Nivel-Z 5</StatusText>
          <StatusPane $width={76}>X:423, Y:141</StatusPane>
          <StatusPane $width={81}>Tag usados: 3</StatusPane>
          <svg width="16" height="16" aria-hidden="true">
            <path d="M5 16L16 5M9 16l7-7M13 16l3-3" stroke={shade} strokeWidth="2" />
          </svg>
        </Status>
      </Window>
    </Page>
  );
}
